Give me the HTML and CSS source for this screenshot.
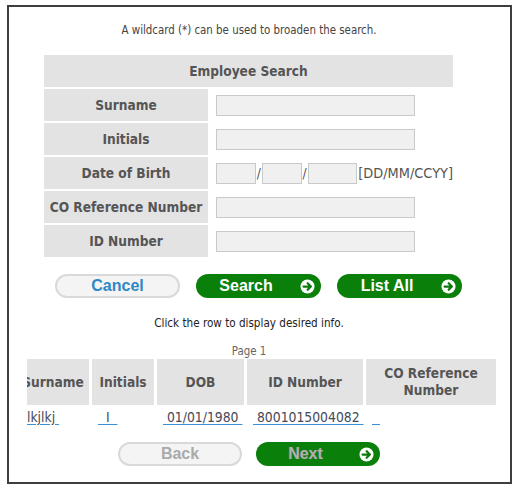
FILE: index.html
```html
<!DOCTYPE html>
<html>
<head>
<meta charset="utf-8">
<link rel="stylesheet" href="styles.css">
</head>
<body>
<div class="frame">
  <div class="content">
    <p class="hint">A wildcard (*) can be used to broaden the search.</p>

    <div class="search-grid">
      <div class="head">Employee Search</div>
      <div class="label">Surname</div>
      <div class="value"><span class="field field-wide"></span></div>
      <div class="label">Initials</div>
      <div class="value"><span class="field field-wide"></span></div>
      <div class="label">Date of Birth</div>
      <div class="value">
        <span class="field field-dd"></span><span class="slash">/</span><span class="field field-mm"></span><span class="slash">/</span><span class="field field-yy"></span><span class="fmt">[DD/MM/CCYY]</span>
      </div>
      <div class="label">CO Reference Number</div>
      <div class="value"><span class="field field-wide"></span></div>
      <div class="label">ID Number</div>
      <div class="value"><span class="field field-wide"></span></div>
    </div>

    <div class="btn-row">
      <div class="btn btn-light"><span class="btn-text txt-blue">Cancel</span></div>
      <div class="btn btn-green"><span class="btn-text">Search</span><svg class="ico" viewBox="0 0 16 16" width="15" height="15"><circle cx="8" cy="8" r="7.5" fill="#fff"/><path d="M3.8 8H11.4M8.2 4.6L11.6 8L8.2 11.4" fill="none" stroke="#0b7a0b" stroke-width="2.4" stroke-linecap="round" stroke-linejoin="round"/></svg></div>
      <div class="btn btn-green"><span class="btn-text">List All</span><svg class="ico" viewBox="0 0 16 16" width="15" height="15"><circle cx="8" cy="8" r="7.5" fill="#fff"/><path d="M3.8 8H11.4M8.2 4.6L11.6 8L8.2 11.4" fill="none" stroke="#0b7a0b" stroke-width="2.4" stroke-linecap="round" stroke-linejoin="round"/></svg></div>
    </div>

    <p class="note">Click the row to display desired info.</p>
    <p class="page">Page 1</p>

    <div class="results-clip">
      <div class="results">
        <div class="rh">Surname</div>
        <div class="rh">Initials</div>
        <div class="rh">DOB</div>
        <div class="rh">ID Number</div>
        <div class="rh">CO Reference Number</div>
        <div class="rd"><a class="lnk">&nbsp;lkjlkj&nbsp;</a></div>
        <div class="rd"><a class="lnk">&nbsp;&nbsp;I&nbsp;&nbsp;</a></div>
        <div class="rd"><a class="lnk">&nbsp;01/01/1980&nbsp;</a></div>
        <div class="rd"><a class="lnk">&nbsp;8001015004082&nbsp;</a></div>
        <div class="rd"><a class="lnk">&nbsp;&nbsp;</a></div>
      </div>
    </div>

    <div class="pager">
      <div class="btn btn-light btn-pg"><span class="btn-text txt-gray">Back</span></div>
      <div class="btn btn-green btn-pg"><span class="btn-text txt-dis">Next</span><svg class="ico" viewBox="0 0 16 16" width="15" height="15"><circle cx="8" cy="8" r="7.5" fill="#fff"/><path d="M3.8 8H11.4M8.2 4.6L11.6 8L8.2 11.4" fill="none" stroke="#0b7a0b" stroke-width="2.4" stroke-linecap="round" stroke-linejoin="round"/></svg></div>
    </div>
  </div>
</div>
</body>
</html>
```

FILE: styles.css
```css
html, body {
  margin: 0;
  padding: 0;
  background: #fff;
}
body {
  font-family: "DejaVu Sans Condensed", "DejaVu Sans", sans-serif;
  font-stretch: condensed;
  color: #444;
}
.frame {
  margin: 5px 0 0 7px;
  width: 501px;
  height: 475px;
  border: 2px solid #3e3e3e;
  overflow: hidden;
}
.content {
  width: 480px;
}
.hint {
  margin: 16px 0 0;
  font-size: 11.4px;
  line-height: 14px;
  text-align: center;
  color: #444;
}
.search-grid {
  display: grid;
  grid-template-columns: 164px 243px;
  grid-auto-rows: 32px;
  gap: 2px;
  width: 409px;
  margin: 18px 0 0 35px;
}
.head {
  grid-column: 1 / span 2;
  background: #e3e3e3;
  display: flex;
  align-items: center;
  justify-content: center;
  font-weight: bold;
  font-size: 13.6px;
  color: #555;
}
.label {
  background: #e3e3e3;
  display: flex;
  align-items: center;
  justify-content: center;
  font-weight: bold;
  font-size: 13.6px;
  color: #555;
}
.value {
  display: flex;
  align-items: center;
  padding-left: 6px;
}
.field {
  display: block;
  height: 19px;
  background: #f0f0f0;
  border: 1px solid #c9c9c9;
}
.field-wide { width: 197px; }
.field-dd { width: 38px; }
.field-mm { width: 38px; }
.field-yy { width: 48px; }
.slash {
  width: 6px;
  text-align: center;
  font-size: 13.6px;
  color: #555;
}
.fmt {
  font-size: 14.4px;
  color: #555;
  margin-left: 1px;
}
.btn-row {
  display: flex;
  gap: 16px;
  margin: 17px 0 0 46px;
}
.btn {
  display: flex;
  align-items: center;
  width: 125px;
  height: 24px;
  box-sizing: border-box;
  border-radius: 12px;
  font-family: "Liberation Sans", Arial, sans-serif;
  font-stretch: normal;
  font-weight: bold;
  font-size: 16px;
}
.btn-light {
  background: #f4f4f4;
  border: 2px solid #d9d9d9;
}
.btn-green {
  background: #0a800a;
  color: #fff;
  padding-right: 6px;
}
.btn-text {
  flex: 1;
  text-align: center;
}
.btn-green .btn-text {
  padding-right: 4px;
}
.txt-blue { color: #2f88c5; }
.txt-gray { color: #aaa; }
.txt-dis { color: #aeb2ae; text-shadow: 0 0 1px #6a6a6a; }
.ico { flex: none; }
.note {
  margin: 18px 0 0;
  font-size: 11.6px;
  line-height: 14px;
  text-align: center;
  color: #222;
}
.page {
  margin: 14px 0 0;
  font-size: 11.4px;
  line-height: 14px;
  text-align: center;
  color: #666;
}
.results-clip {
  margin: 1px 0 0 18px;
  width: 472px;
  overflow: hidden;
}
.results {
  display: grid;
  grid-template-columns: 72px 62px 87px 116px 130px;
  grid-template-rows: 46px 22px;
  column-gap: 3px;
  row-gap: 2px;
  margin-left: -10px;
}
.rh {
  background: #e3e3e3;
  display: flex;
  align-items: center;
  justify-content: center;
  text-align: center;
  font-weight: bold;
  font-size: 13.6px;
  line-height: 17px;
  color: #555;
  padding: 0 8px;
}
.rd {
  padding-left: 6px;
  font-size: 13.8px;
  line-height: 20px;
  white-space: nowrap;
}
.lnk {
  color: #454a58;
  text-decoration: underline;
  text-decoration-color: #3b8fd6;
  text-underline-offset: 2px;
}
.pager {
  display: flex;
  gap: 14px;
  margin: 13px 0 0 109px;
}
.btn-pg { width: 124px; }
```
